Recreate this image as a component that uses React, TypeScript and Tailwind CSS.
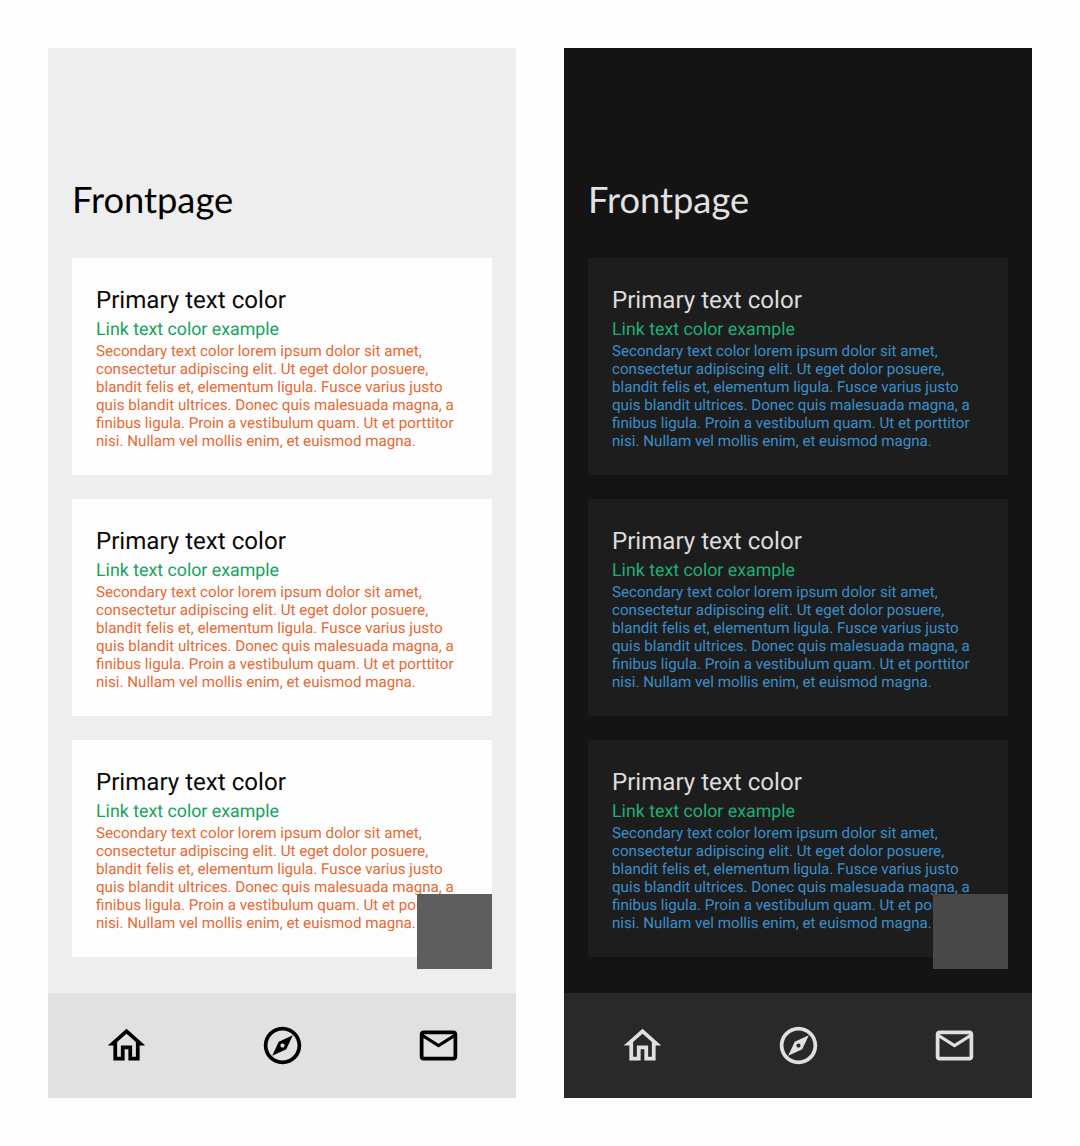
import React from 'react';

// --- ICONS (Material outlined) ---

const IconHome = ({ className }: { className: string }) => (
  <svg viewBox="0 0 24 24" fill="currentColor" className={className}>
    <path d="M12 5.69l5 4.5V18h-2v-6H9v6H7v-7.81l5-4.5M12 3L2 12h3v8h6v-6h2v6h6v-8h3L12 3z" />
  </svg>
);

const IconExplore = ({ className }: { className: string }) => (
  <svg viewBox="0 0 24 24" fill="currentColor" className={className}>
    <path d="M12 2C6.48 2 2 6.48 2 12s4.48 10 10 10 10-4.48 10-10S17.52 2 12 2zm0 18c-4.41 0-8-3.59-8-8s3.59-8 8-8 8 3.59 8 8-3.59 8-8 8zm-5.5-2.5l7.51-3.49L17.5 6.5 9.99 9.99 6.5 17.5zm5.5-6.6c.61 0 1.1.49 1.1 1.1s-.49 1.1-1.1 1.1-1.1-.49-1.1-1.1.49-1.1 1.1-1.1z" />
  </svg>
);

const IconMail = ({ className }: { className: string }) => (
  <svg viewBox="0 0 24 24" fill="currentColor" className={className}>
    <path d="M22 6c0-1.1-.9-2-2-2H4c-1.1 0-2 .9-2 2v12c0 1.1.9 2 2 2h16c1.1 0 2-.9 2-2V6zm-2 0l-8 5-8-5h16zm0 12H4V8l8 5 8-5v10z" />
  </svg>
);

const lorem =
  'Secondary text color lorem ipsum dolor sit amet, consectetur adipiscing elit. Ut eget dolor posuere, blandit felis et, elementum ligula. Fusce varius justo quis blandit ultrices. Donec quis malesuada magna, a finibus ligula. Proin a vestibulum quam. Ut et porttitor nisi. Nullam vel mollis enim, et euismod magna.';

type Theme = {
  page: string;
  title: string;
  card: string;
  primary: string;
  link: string;
  secondary: string;
  nav: string;
  icon: string;
  fab: string;
};

const light: Theme = {
  page: 'bg-[#eeeeee]',
  title: 'text-[#000000]',
  card: 'bg-[#fdfdfd]',
  primary: 'text-[#0a0a0a]',
  link: 'text-[#17a35f]',
  secondary: 'text-[#e56a35]',
  nav: 'bg-[#e1e1e1]',
  icon: 'text-[#000000]',
  fab: 'bg-[#5e5e5e]',
};

const dark: Theme = {
  page: 'bg-[#141414]',
  title: 'text-[#e2e2e2]',
  card: 'bg-[#1d1d1d]',
  primary: 'text-[#dcdcdc]',
  link: 'text-[#1fae75]',
  secondary: 'text-[#3a8fcb]',
  nav: 'bg-[#292929]',
  icon: 'text-[#e0e0e0]',
  fab: 'bg-[#484848]',
};

const Card = ({ theme }: { theme: Theme }) => (
  <div className={`h-[217px] p-6 ${theme.card}`}>
    <p className={`text-[24.1px] leading-[36px] ${theme.primary}`}>Primary text color</p>
    <p className={`text-[17.8px] leading-[24px] ${theme.link}`}>Link text color example</p>
    <p className={`text-[15.15px] leading-[18px] ${theme.secondary}`}>{lorem}</p>
  </div>
);

const Panel = ({ theme }: { theme: Theme }) => (
  <div className={`relative w-[468px] h-[1050px] flex flex-col ${theme.page}`}>
    <div className="h-[210px] px-6 pt-[127px]">
      <h1 className={`text-[36.3px] leading-[48px] font-['Lato',sans-serif] ${theme.title}`}>Frontpage</h1>
    </div>
    <div className="flex-1 flex flex-col gap-6 px-6">
      <Card theme={theme} />
      <Card theme={theme} />
      <Card theme={theme} />
    </div>
    <div className={`h-[105px] grid grid-cols-3 place-items-center ${theme.nav}`}>
      <IconHome className={`w-[45px] h-[45px] ${theme.icon}`} />
      <IconExplore className={`w-[45px] h-[45px] ${theme.icon}`} />
      <IconMail className={`w-[45px] h-[45px] ${theme.icon}`} />
    </div>
    <div className={`absolute right-6 bottom-[129px] w-[75px] h-[75px] ${theme.fab}`}></div>
  </div>
);

export default function App() {
  return (
    <div className="min-h-[1146px] bg-[#fdfdfd] p-12 flex gap-12 font-['Roboto',sans-serif] [text-rendering:geometricPrecision]">
      <Panel theme={light} />
      <Panel theme={dark} />
    </div>
  );
}
